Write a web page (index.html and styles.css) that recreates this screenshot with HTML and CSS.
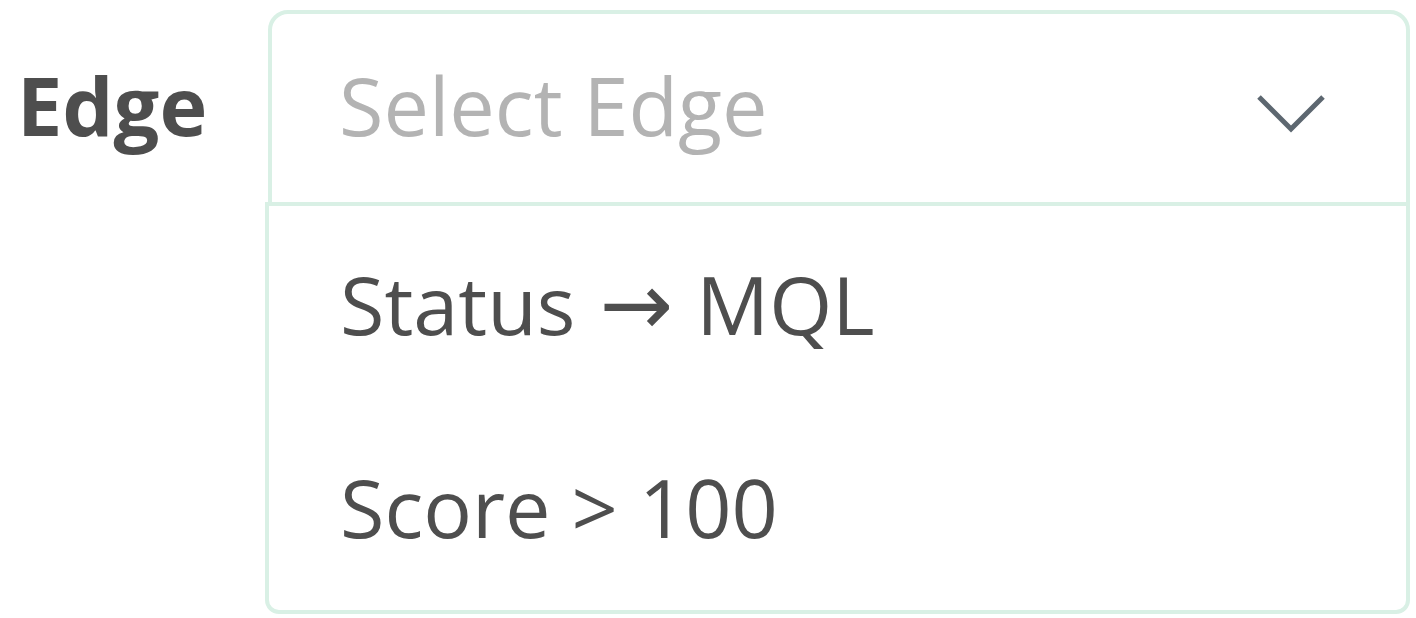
FILE: index.html
```html
<!DOCTYPE html>
<html>
<head>
<meta charset="utf-8">
<link rel="stylesheet" href="styles.css">
</head>
<body>
<div class="field">
  <label class="label">Edge</label>
  <div class="select">
    <div class="control">
      <span class="placeholder">Select Edge</span>
      <svg class="chevron" width="70" height="40" viewBox="0 0 70 40"><path d="M3 4 L35 36 L67 4" fill="none" stroke="#5d6770" stroke-width="5"/></svg>
    </div>
    <div class="menu">
      <div class="option">Status <span class="arrow">→</span> MQL</div>
      <div class="option">Score &gt; 100</div>
    </div>
  </div>
</div>
</body>
</html>
```

FILE: styles.css
```css
html, body {
  margin: 0;
  padding: 0;
  background: #ffffff;
}
body {
  font-family: "Open Sans", "DejaVu Sans", sans-serif;
  color: #4e4e4e;
  min-height: 614px;
}
.field {
  display: flex;
  align-items: flex-start;
  padding: 10px 0 0 17px;
}
.label {
  font-size: 81px;
  font-weight: 700;
  line-height: 112px;
  margin-top: 39px;
  width: 251px;
}
.select {
  width: 1142px;
}
.control {
  box-sizing: border-box;
  height: 196px;
  border: 4px solid #d9f0e5;
  border-radius: 20px 20px 0 0;
  display: flex;
  align-items: flex-start;
  justify-content: space-between;
  padding: 35px 80px 0 67px;
}
.placeholder {
  font-size: 81px;
  line-height: 112px;
  color: #b3b3b3;
}
.chevron {
  margin-top: 44px;
}
.menu {
  box-sizing: border-box;
  margin: -4px 0 0 -3px;
  width: 1145px;
  height: 412px;
  border: 4px solid #d9f0e5;
  border-radius: 0 0 14px 14px;
  background: #ffffff;
  padding: 42px 0 0 71px;
  display: flex;
  flex-direction: column;
  gap: 90px;
}
.option {
  font-size: 81px;
  line-height: 112px;
}
.arrow {
  font-family: "DejaVu Sans", sans-serif;
  font-size: 88px;
  margin: 0 2px 0 3px;
}
```
